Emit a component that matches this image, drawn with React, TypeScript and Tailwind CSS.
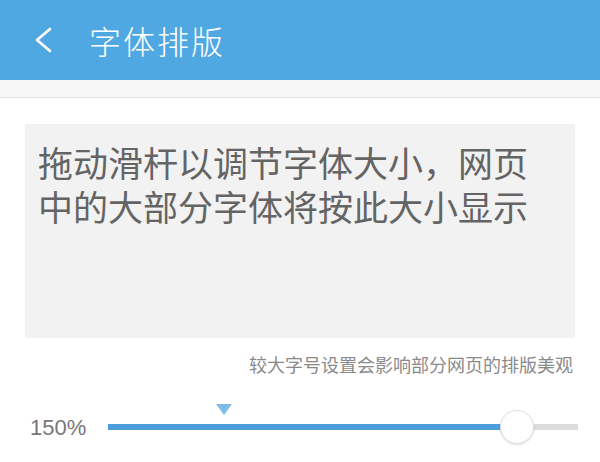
import React from 'react';

const cjk = { fontFamily: '"Noto Sans CJK SC", "Noto Sans", sans-serif' };

export default function App() {
  const percent = 150;

  return (
    <div className="w-[600px] h-[462px] bg-white overflow-hidden" style={cjk}>
      {/* top bar */}
      <div className="h-[80px] bg-[#50a8e3] flex items-center">
        <svg className="ml-[31px] w-[24px] h-[26px]" viewBox="0 0 24 26" fill="none">
          <path d="M19 2 L6 13 L19 24" stroke="#fff" strokeWidth="2.6" strokeLinecap="round" strokeLinejoin="round" />
        </svg>
        <h1 className="ml-[34px] text-[32px] font-light text-white leading-none tracking-[2px]">字体排版</h1>
      </div>
      <div className="h-[18px] bg-[#f7f7f7] border-b border-[#e3e3e3]" />

      <div className="px-[25px] pt-[26px]">
        <div className="h-[214px] bg-[#f2f2f2] pl-[13px] pt-[16px] text-[35px] leading-[44px] text-[#646464]">
          <div>拖动滑杆以调节字体大小，网页</div>
          <div>中的大部分字体将按此大小显示</div>
        </div>
        <p className="mt-[14px] pr-[2px] text-right text-[18px] leading-[24px] text-[#8a8a8a]">
          较大字号设置会影响部分网页的排版美观
        </p>
      </div>

      {/* slider */}
      <div className="mt-[31px] h-[40px] flex items-center pl-[30px] pr-[22px]">
        <span className="w-[78px] text-[22px] text-[#777]" style={{ fontFamily: '"Liberation Sans", Arial, sans-serif' }}>
          {percent}%
        </span>
        <div className="relative flex-1 h-[6px] bg-[#dcdcdc]">
          <div className="absolute left-0 top-0 h-[6px] w-[400px] bg-[#4a9edb]" />
          <div className="absolute left-[108px] top-[-20px] w-0 h-0 border-l-[8px] border-r-[8px] border-t-[11px] border-l-transparent border-r-transparent border-t-[#7dbbe8]" />
          <div className="absolute left-[392px] top-[-14px] w-[34px] h-[34px] rounded-full bg-white border border-[#dedede] shadow-[0_1px_2px_rgba(0,0,0,0.12)]" />
        </div>
      </div>
    </div>
  );
}
